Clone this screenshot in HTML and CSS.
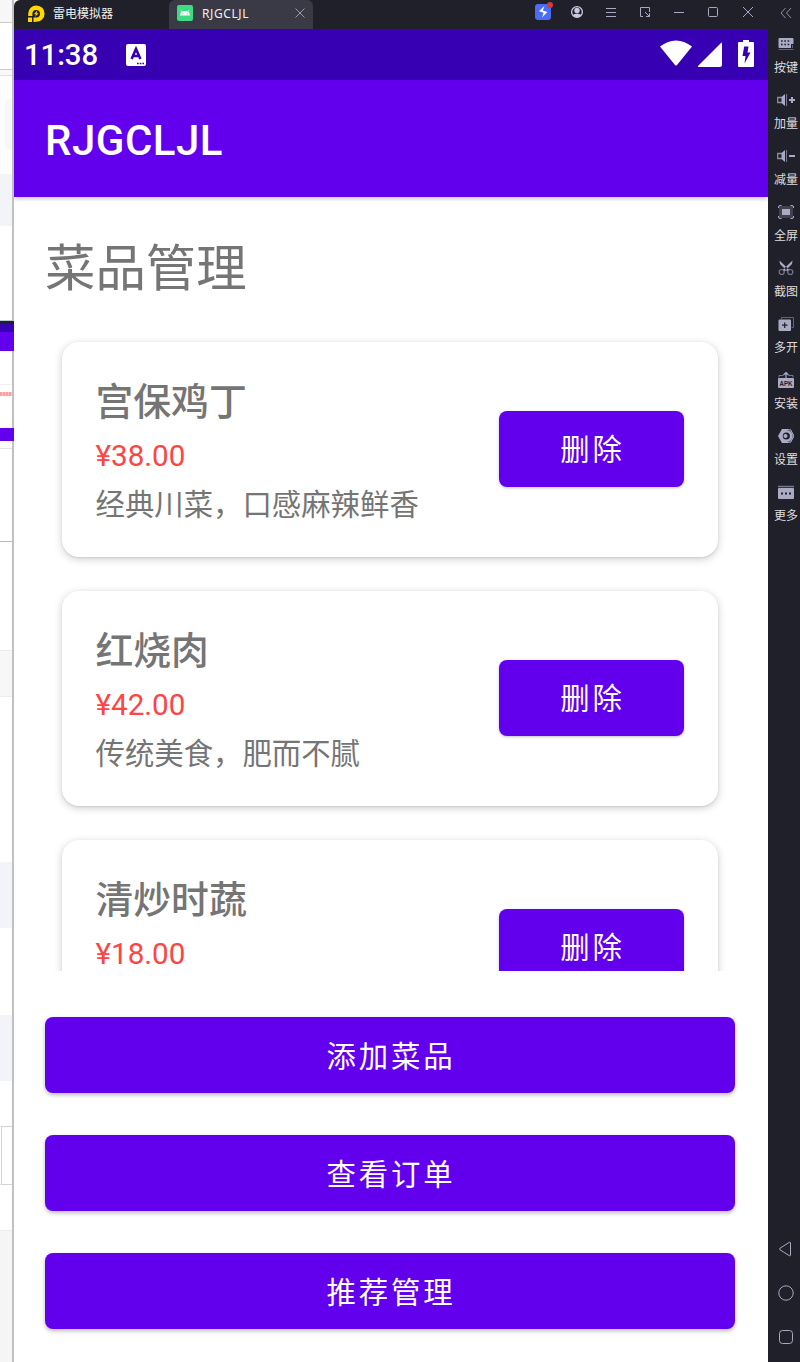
FILE: index.html
```html
<!DOCTYPE html>
<html lang="zh-CN">
<head>
    <meta charset="UTF-8">
    <meta name="viewport" content="width=device-width, initial-scale=1.0">
    <title>RJGCLJL</title>
    <link rel="stylesheet" href="styles.css">
</head>
<body>

    <!-- edge of the window behind the emulator -->
    <div class="backdrop">
        <div class="seg seg-tabs"></div>
        <div class="seg seg-address"></div>
        <div class="seg seg-bookmarks"></div>
        <div class="seg seg-head"><span></span></div>
        <div class="seg seg-band"></div>
        <div class="seg seg-gap"></div>
        <div class="seg seg-dark"></div>
        <div class="seg seg-indigo"></div>
        <div class="seg seg-purple"></div>
        <div class="seg seg-line"></div>
        <div class="seg seg-red"><span></span></div>
        <div class="seg seg-button"></div>
        <div class="seg seg-under"></div>
        <div class="seg seg-blank"></div>
        <div class="seg seg-page"></div>
        <div class="seg seg-grey"></div>
        <div class="seg seg-white"></div>
        <div class="seg seg-blue"></div>
        <div class="seg seg-white2"></div>
        <div class="seg seg-blue"></div>
        <div class="seg seg-white3"></div>
        <div class="seg seg-cell"></div>
        <div class="seg seg-white3"></div>
        <div class="seg seg-end"></div>
    </div>

    <div class="emulator">
        <header class="titlebar">
            <div class="brand">
                <svg width="18" height="18" viewBox="0 0 18 18">
                    <path d="M1 17V12.5H5V17Z M6.5 17V12.6H9.5A3.8 3.8 0 1 0 5.4 8.9V11H1.2V8.5A8.2 8.2 0 1 1 9.3 16.8Z" fill="#ffd800"/>
                    <path d="M10.3 5.2L7 9.2H9L8 12L11.6 8.2H9.6Z" fill="#ffd800"/>
                </svg>
                <span>雷电模拟器</span>
            </div>
            <div class="tab">
                <svg width="16" height="16" viewBox="0 0 16 16">
                    <rect width="16" height="16" rx="2" fill="#3ddc84"/>
                    <path d="M3 10.5A5 4.5 0 0 1 13 10.5Z" fill="#fff"/>
                    <path d="M5 6.8L4 5.2M11 6.8L12 5.2" stroke="#fff" stroke-width=".8"/>
                    <circle cx="5.8" cy="8.8" r=".6" fill="#3ddc84"/>
                    <circle cx="10.2" cy="8.8" r=".6" fill="#3ddc84"/>
                </svg>
                <span>RJGCLJL</span>
                <svg class="tab-close" width="10" height="10" viewBox="0 0 10 10" stroke="#9b9ba6" fill="none"><path d="M.5.5L9.5 9.5M9.5.5L.5 9.5"/></svg>
            </div>
            <div class="tools">
                <svg width="20" height="20" viewBox="0 0 20 20">
                    <rect x="2" y="4" width="16" height="16" rx="3" fill="#4a6cf7"/>
                    <path d="M11.4 6L6 11.2L10.6 12.8L9 17.6L14.4 12L9.8 10.6Z" fill="#fff"/>
                    <circle cx="17" cy="5" r="3" fill="#d63a3a"/>
                </svg>
                <svg width="20" height="20" viewBox="0 0 20 20" fill="none">
                    <circle cx="10" cy="12" r="5.4" stroke="#c9c9e0" stroke-width="1.3"/>
                    <circle cx="10" cy="10.4" r="2.7" fill="#c9c9e0"/>
                    <path d="M5.5 15Q10 11.8 14.5 15Q10 19.4 5.5 15Z" fill="#c9c9e0"/>
                </svg>
                <svg width="20" height="20" viewBox="0 0 20 20" stroke="#a9a9c4" fill="none"><path d="M5 8.5H15M5 12.5H15M5 16.5H15"/></svg>
                <svg width="20" height="20" viewBox="0 0 20 20" stroke="#a9a9c4" fill="none"><path d="M8 16.5H5.5V7.5H14.5V12M10 12L14.5 16.5M14.5 13.3V16.5H11"/></svg>
                <svg width="20" height="20" viewBox="0 0 20 20" stroke="#a9a9c4" fill="none"><path d="M5 12.5H15"/></svg>
                <svg width="20" height="20" viewBox="0 0 20 20" stroke="#a9a9c4" fill="none"><rect x="5.5" y="7.5" width="9" height="9" rx="1"/></svg>
                <svg width="20" height="20" viewBox="0 0 20 20" stroke="#a9a9c4" fill="none"><path d="M6 7L16 17M16 7L6 17"/></svg>
            </div>
        </header>

        <div class="phone">
            <div class="statusbar">
                <span class="time">11:38</span>
                <svg class="ime" width="20" height="22" viewBox="0 0 20 22">
                    <rect width="20" height="22" rx="2" fill="#fff"/>
                    <path d="M5.6 15L10 5L14.4 15M7 12H13" stroke="#3700b3" stroke-width="2.6" fill="none"/>
                    <path d="M11 19.5H18" stroke="#3700b3" stroke-width="1.7" stroke-dasharray="1.7 1"/>
                </svg>
                <svg class="signals" width="96" height="30" viewBox="0 0 96 30" fill="#fff">
                    <path d="M1 7.5Q17 -4.5 33 7.5L17.8 26.2Q17 27 16.2 26.2Z"/>
                    <path d="M39 27L62 4Q63 3 63 4.500V26Q63 28 61 28H39.500Q38.500 28 39 27Z"/>
                    <path d="M80 3H84V1H90V3H94Q95 3 95 4V27Q95 28 94 28H80Q79 28 79 27V4Q79 3 80 3Z"/>
                    <path d="M85.200 7.500H89.500L88.500 13.500H91.500L85.500 24.500L86.500 17H83.500Z" fill="#3700b3"/>
                </svg>
            </div>
            <div class="appbar">RJGCLJL</div>

            <main class="content">
                <h1>菜品管理</h1>
                <div class="dish-list">
                    <div class="dish">
                        <div class="dish-info">
                            <h2>宫保鸡丁</h2>
                            <p class="price">¥38.00</p>
                            <p class="desc">经典川菜，口感麻辣鲜香</p>
                        </div>
                        <button class="btn btn-delete">删除</button>
                    </div>
                    <div class="dish">
                        <div class="dish-info">
                            <h2>红烧肉</h2>
                            <p class="price">¥42.00</p>
                            <p class="desc">传统美食，肥而不腻</p>
                        </div>
                        <button class="btn btn-delete">删除</button>
                    </div>
                    <div class="dish">
                        <div class="dish-info">
                            <h2>清炒时蔬</h2>
                            <p class="price">¥18.00</p>
                        </div>
                        <button class="btn btn-delete">删除</button>
                    </div>
                </div>
                <div class="actions">
                    <button class="btn">添加菜品</button>
                    <button class="btn">查看订单</button>
                    <button class="btn">推荐管理</button>
                </div>
            </main>
        </div>

        <aside class="sidebar">
            <svg class="collapse" width="12" height="12" viewBox="0 0 12 12" stroke="#8f8fa6" fill="none"><path d="M5.500 1L1 6L5.500 11M11 1L6.500 6L11 11"/></svg>
            <div class="tool">
                <svg width="16" height="16" viewBox="0 0 16 16">
                    <path d="M1.500 2H14.500Q15.500 2 15.500 3V8H13V12H1.500Q.5 12 .5 11V3Q.5 2 1.500 2Z" fill="#aaaac5"/>
                    <path d="M3 5H13M3 8.500H12" stroke="#20202a" stroke-width="1.600" stroke-dasharray="1.600 1.700"/>
                    <path d="M.5 13.500H15.500M14.500 9V12" stroke="#62627a"/>
                </svg>
                <span>按键</span>
            </div>
            <div class="tool">
                <svg width="18" height="16" viewBox="0 0 18 16">
                    <path d="M5 5.500H.7V10.500H5" stroke="#8d8da6" stroke-width="1.300" fill="none"/>
                    <path d="M4.500 5L8 2V14L4.500 11Z" fill="#aaaac5"/>
                    <path d="M9.500 2V14" stroke="#77778e"/>
                    <path d="M12 8H18M15 5V11" stroke="#aaaac5" stroke-width="2"/>
                </svg>
                <span>加量</span>
            </div>
            <div class="tool">
                <svg width="18" height="16" viewBox="0 0 18 16">
                    <path d="M5 5.500H.7V10.500H5" stroke="#8d8da6" stroke-width="1.300" fill="none"/>
                    <path d="M4.500 5L8 2V14L4.500 11Z" fill="#aaaac5"/>
                    <path d="M9.500 2V14" stroke="#77778e"/>
                    <path d="M12 8H18" stroke="#aaaac5" stroke-width="2"/>
                </svg>
                <span>减量</span>
            </div>
            <div class="tool">
                <svg width="16" height="16" viewBox="0 0 16 16">
                    <rect x="1" y="2" width="14" height="12" fill="#41414e"/>
                    <rect x="4" y="5" width="8" height="6" fill="#aaaac5"/>
                    <path d="M.5 4V3Q.5 1.500 2 1.500H3.500M12.500 1.500H14Q15.500 1.500 15.500 3V4M.5 12V13Q.5 14.500 2 14.500H3.500M12.500 14.500H14Q15.500 14.500 15.500 13V12" stroke="#aaaac5" fill="none"/>
                </svg>
                <span>全屏</span>
            </div>
            <div class="tool">
                <svg width="16" height="16" viewBox="0 0 16 16" fill="none">
                    <path d="M1.500 .5L11.500 10L9.500 11.500L2 4Z M14.500 .5L4.500 10L6.500 11.500L14 4Z" fill="#aaaac5"/>
                    <circle cx="3.700" cy="12" r="2.500" stroke="#77778e" stroke-width="1.200"/>
                    <circle cx="12.300" cy="12" r="2.500" stroke="#77778e" stroke-width="1.200"/>
                </svg>
                <span>截图</span>
            </div>
            <div class="tool">
                <svg width="16" height="16" viewBox="0 0 16 16">
                    <path d="M3.500 3V1.500H15.500V11.500H13.500" stroke="#62627a" fill="none"/>
                    <rect x=".5" y="3.500" width="12.500" height="11.500" rx="1" fill="#aaaac5"/>
                    <path d="M4 9.200H9.500M6.700 6.500V12" stroke="#20202a" stroke-width="1.200"/>
                </svg>
                <span>多开</span>
            </div>
            <div class="tool">
                <svg width="16" height="16" viewBox="0 0 16 16">
                    <path d="M1 5.500V3.500H5.500M10.500 3.500H15V5.500" stroke="#77778e" fill="none"/>
                    <path d="M8 6V.5M5.500 3L8 .5L10.500 3" stroke="#aaaac5" stroke-width="1.200" fill="none"/>
                    <rect y="6" width="16" height="10" rx="1" fill="#aaaac5"/>
                    <text class="apk" x="8" y="13.800" text-anchor="middle" textLength="13" lengthAdjust="spacingAndGlyphs">APK</text>
                </svg>
                <span>安装</span>
            </div>
            <div class="tool">
                <svg width="16" height="16" viewBox="0 0 16 16">
                    <path d="M4 1H12L16 8L12 15H4L0 8Z" fill="#aaaac5"/>
                    <path d="M9 2.500A5.500 5.500 0 0 1 9 13.500L12 15L16 8L12 1Z" fill="#62627a"/>
                    <path d="M12.500 1.500L16 8L12.500 14.500" stroke="#aaaac5" fill="none"/>
                    <circle cx="8.300" cy="8" r="3.600" fill="#20202a"/>
                    <circle cx="7.500" cy="8" r="2" fill="#aaaac5"/>
                </svg>
                <span>设置</span>
            </div>
            <div class="tool">
                <svg width="16" height="16" viewBox="0 0 16 16">
                    <path d="M0 2.500H16" stroke="#77778e" stroke-width="1.500"/>
                    <rect y="4" width="16" height="11" rx="1" fill="#aaaac5"/>
                    <path d="M3 9.500H13" stroke="#20202a" stroke-width="2" stroke-dasharray="2 2"/>
                </svg>
                <span>更多</span>
            </div>
            <div class="nav-keys">
                <svg width="16" height="16" viewBox="0 0 16 16" stroke="#a9a9c4" fill="none"><path d="M11.500 1.200L2 7.200Q1 8 2 8.800L11.500 14.800Q12.500 15 12.500 14V2Q12.500 1 11.500 1.200Z"/></svg>
                <svg width="16" height="16" viewBox="0 0 16 16" stroke="#a9a9c4" fill="none"><circle cx="8" cy="8" r="7.200"/></svg>
                <svg width="16" height="16" viewBox="0 0 16 16" stroke="#a9a9c4" fill="none"><rect x="1.500" y="1.500" width="13" height="13" rx="3"/></svg>
            </div>
        </aside>
    </div>

</body>
</html>
```
FILE: styles.css
```css
* {
    box-sizing: border-box;
}

body {
    margin: 0;
    display: flex;
    width: 800px;
    height: 1362px;
    overflow: hidden;
    background: white;
    font-family: Roboto, "Noto Sans CJK SC", sans-serif;
}

h1, h2, p {
    margin: 0;
    font-weight: normal;
}

svg {
    display: block;
    flex: none;
}

/* strip on the left */
.backdrop {
    display: flex;
    flex-direction: column;
    width: 14px;
    height: 1362px;
    border-right: 2px solid #c1c1c1;
}

.seg { flex: none; }
.seg-tabs { height: 23px; background: #f7f7f7; border-bottom: 1px solid #cbcbcb; }
.seg-address { height: 47px; border-bottom: 1px solid #cbcbcb; }
.seg-bookmarks { height: 6px; background: #f8f8f8; border-bottom: 1px solid #e0e0e0; }
.seg-head { height: 98px; padding: 23px 0 0 5px; background: #fdfdfd; }
.seg-head span { display: block; height: 51px; background: #f6f7f9; border-radius: 5px 0 0 5px; }
.seg-band { height: 52px; background: #f3f4f8; }
.seg-gap { height: 95px; border-bottom: 1px solid #b9c8dc; }
.seg-dark { height: 3px; margin-right: -2px; background: #20202a; }
.seg-indigo { height: 8px; margin-right: -2px; background: #3700b3; }
.seg-purple { height: 19px; margin-right: -2px; background: #6200ee; }
.seg-line { height: 34px; border-bottom: 1px solid #f2f2f2; }
.seg-red { height: 43px; padding-top: 7px; }
.seg-red span { display: block; height: 4px; background: repeating-linear-gradient(90deg, #ff9c9c 0 2px, #ffc4c4 2px 3px); }
.seg-button { height: 13px; margin-right: -2px; background: #6200ee; }
.seg-under { height: 8px; border-bottom: 1px solid #e4e4e4; }
.seg-blank { height: 93px; border-bottom: 1px solid #b4bccb; }
.seg-page { height: 108px; }
.seg-grey { height: 47px; background: #f7f7f7; border-top: 1px solid #ececec; border-bottom: 1px solid #ececec; }
.seg-white { height: 165px; }
.seg-blue { height: 66px; background: #f3f4f9; }
.seg-white2 { height: 87px; }
.seg-white3 { height: 45px; }
.seg-cell { height: 59px; border-top: 1px solid #d3d3dd; border-bottom: 1px solid #d3d3dd; border-left: 1px solid #fff; box-shadow: inset 1px 0 #d3d3dd; }
.seg-end { flex: 1; background: #f5f5f5; border-top: 1px solid #eee; }

.emulator {
    display: grid;
    grid-template-columns: 754px 32px;
    grid-template-rows: 29px 1333px;
    width: 786px;
    background: #20202a;
    border-top-left-radius: 6px;
}

.titlebar {
    display: flex;
    align-items: flex-start;
    color: #f0f0f0;
    font-family: "Noto Sans", "Noto Sans CJK SC", sans-serif;
    font-size: 12px;
    line-height: 28px;
}

.brand {
    display: flex;
    width: 155px;
    padding-left: 13px;
}

.brand svg {
    margin: 5px 8px 0 0;
}

.tab {
    display: flex;
    width: 144px;
    height: 29px;
    padding-left: 8px;
    background: #3a3a46;
    border-radius: 6px 6px 0 0;
}

.tab > svg:first-child {
    margin: 5px 9px 0 0;
}

.tab span {
    width: 93px;
    letter-spacing: 0.6px;
}

.tab .tab-close {
    margin-top: 8px;
}

.tools {
    display: flex;
    flex: 1;
    gap: 14px;
    padding-left: 220px;
}

.phone {
    grid-row: 2;
    display: flex;
    flex-direction: column;
    background: white;
    overflow: hidden;
}

.statusbar {
    display: flex;
    height: 51px;
    padding: 0 13px 0 10px;
    background: #3700b3;
    color: white;
}

.time {
    width: 102px;
    font-size: 29.4px;
    font-weight: 500;
    letter-spacing: -0.1px;
    line-height: 52px;
}

.ime {
    margin-top: 15px;
}

.signals {
    margin: 10px 0 0 auto;
}

.appbar {
    flex: none;
    height: 117px;
    padding-left: 31px;
    background: #6200ee;
    box-shadow: 0 1px 5px rgba(0, 0, 0, 0.3);
    color: white;
    font-size: 42px;
    font-weight: 500;
    letter-spacing: 0.5px;
    line-height: 121px;
    clip-path: inset(0 0 -10px 0);
}

.content {
    display: flex;
    flex-direction: column;
    padding: 37px 34px 0 31px;
}

h1 {
    height: 91px;
    color: #757575;
    font-size: 50.4px;
    line-height: 70px;
}

.dish-list {
    height: 646px;
    padding: 17px 16px 0 16.5px;
    overflow: hidden;
}

.dish {
    display: flex;
    align-items: center;
    justify-content: space-between;
    height: 215px;
    margin-bottom: 34px;
    padding: 0 34px 0 34px;
    border-radius: 17px;
    box-shadow: 0 2px 9px rgba(0, 0, 0, 0.2), 0 1px 2px rgba(0, 0, 0, 0.08);
}

.dish-info {
    height: 149px;
    color: #757575;
}

.dish h2 {
    height: 58px;
    font-size: 37.8px;
    font-weight: 500;
    line-height: 54px;
}

.price {
    height: 48px;
    color: #ff4444;
    font-size: 29.6px;
    line-height: 47px;
}

.desc {
    font-size: 29.4px;
    line-height: 48px;
}

.btn {
    display: block;
    width: 690px;
    height: 76px;
    padding: 0 0 3px;
    border: none;
    border-radius: 8px;
    background: #6200ee;
    box-shadow: 0 2px 4px rgba(0, 0, 0, 0.28);
    color: white;
    font-family: Roboto, "Noto Sans CJK SC", sans-serif;
    font-size: 29.4px;
    letter-spacing: 2.8px;
    text-indent: 2px;
}

.btn-delete {
    width: 185px;
    margin-bottom: 2px;
    box-shadow: 0 1px 3px rgba(0, 0, 0, 0.25);
}

.actions {
    display: flex;
    flex-direction: column;
    gap: 42px;
    padding-top: 46px;
}

.sidebar {
    grid-row: 1 / 3;
    grid-column: 2;
    display: flex;
    flex-direction: column;
    align-items: center;
    padding-left: 4px;
    color: #dedede;
    font-family: "Noto Sans CJK SC", sans-serif;
    font-size: 12px;
}

.collapse {
    margin: 7px 0 17px;
}

.tool {
    display: flex;
    flex-direction: column;
    align-items: center;
    height: 56px;
    flex: none;
}

.tool span {
    margin-top: 6px;
    line-height: 18px;
    white-space: nowrap;
}

.apk {
    font-family: "Liberation Sans", sans-serif;
    font-size: 8px;
    font-weight: bold;
    fill: #20202a;
}

.nav-keys {
    display: flex;
    flex-direction: column;
    gap: 28px;
    margin-top: auto;
    padding-bottom: 17px;
}
```
